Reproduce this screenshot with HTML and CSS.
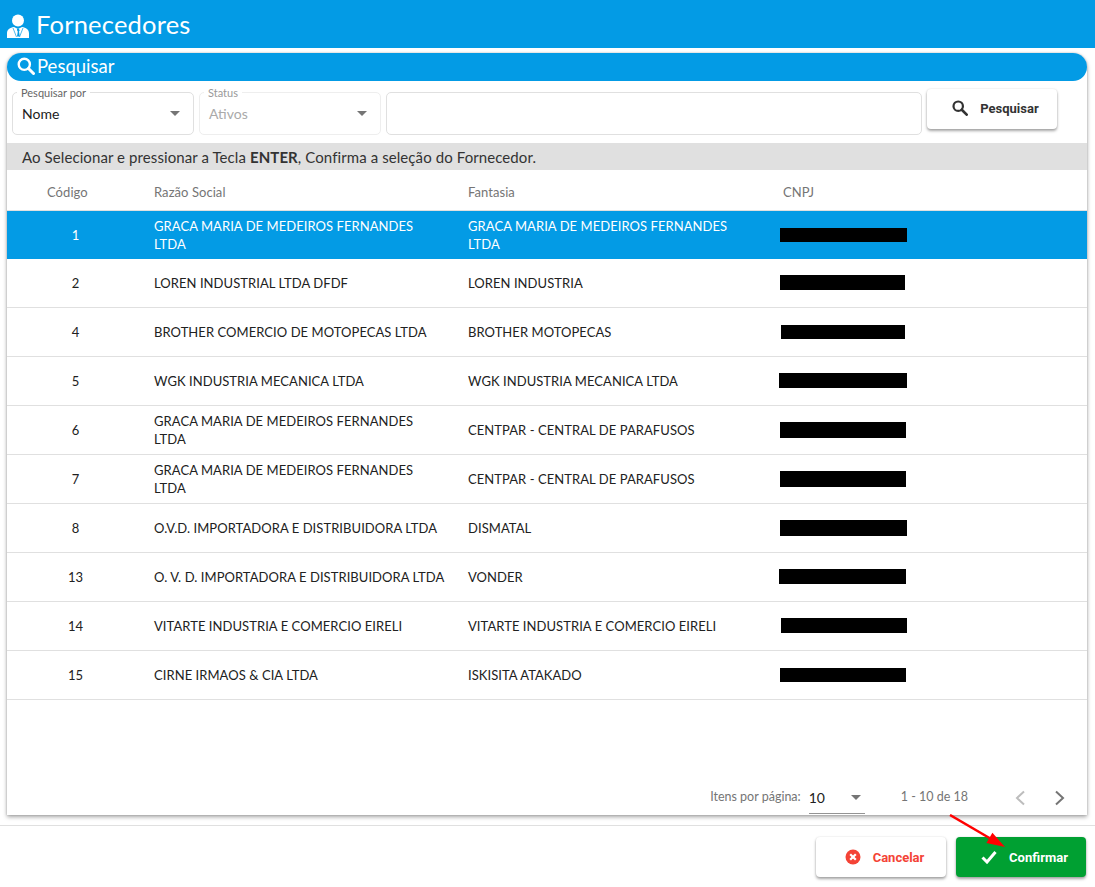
FILE: index.html
```html
<!DOCTYPE html>
<html lang="pt-BR">
<head>
<meta charset="utf-8">
<title>Fornecedores</title>
<link rel="stylesheet" href="styles.css">
</head>
<body>
<header class="topbar">
  <svg class="topbar-icon" viewBox="0 0 22 24" width="22" height="24"><circle cx="11" cy="6.500" r="6" fill="#fff"/><path d="M0 24v-4.500c0-4 3-6 7-6.500l4 2 4-2c4 .5 7 2.500 7 6.500V24z" fill="#fff"/><path d="M10 15h2l.7 1.500-.7 1 .8 5h-2.800l.8-5-.7-1z" fill="#039be5"/><path d="M6 14l3.500 9M16 14l-3.500 9" stroke="#039be5" stroke-width=".7"/></svg>
  <h1 class="topbar-title">Fornecedores</h1>
</header>
<main class="card">
  <div class="search-head">
    <svg viewBox="0 0 18 18" width="18" height="18"><circle cx="7.300" cy="7.300" r="5.600" fill="none" stroke="#fff" stroke-width="2.400"/><path d="M11.500 11.500l5 5" stroke="#fff" stroke-width="3" stroke-linecap="round"/></svg>
    <span>Pesquisar</span>
  </div>
  <div class="filters">
    <div class="field field-select">
      <span class="field-label">Pesquisar por</span>
      <span class="field-value">Nome</span>
      <span class="caret"></span>
    </div>
    <div class="field field-select field-disabled">
      <span class="field-label">Status</span>
      <span class="field-value">Ativos</span>
      <span class="caret"></span>
    </div>
    <div class="field field-text"></div>
    <button class="btn btn-search">
      <svg viewBox="0 0 18 18" width="16" height="16"><circle cx="7" cy="7" r="5.300" fill="none" stroke="#333" stroke-width="2.500"/><path d="M11 11l5.500 5.500" stroke="#333" stroke-width="3" stroke-linecap="round"/></svg>
      <span>Pesquisar</span>
    </button>
  </div>
  <div class="notice">Ao Selecionar e pressionar a Tecla <b>ENTER</b>, Confirma a seleção do Fornecedor.</div>
  <table class="grid">
    <colgroup><col class="c-code"><col class="c-name"><col class="c-fant"><col class="c-cnpj"></colgroup>
    <thead>
      <tr><th class="th-code">Código</th><th>Razão Social</th><th>Fantasia</th><th class="th-cnpj">CNPJ</th></tr>
    </thead>
    <tbody>
      <tr class="selected"><td class="code">1</td><td>GRACA MARIA DE MEDEIROS FERNANDES LTDA</td><td>GRACA MARIA DE MEDEIROS FERNANDES LTDA</td><td><i class="mask" style="width:127px;height:14px;margin-left:0"></i></td></tr>
      <tr class="after-selected"><td class="code">2</td><td>LOREN INDUSTRIAL LTDA DFDF</td><td>LOREN INDUSTRIA</td><td><i class="mask" style="width:125px;height:15px;margin-left:0"></i></td></tr>
      <tr><td class="code">4</td><td>BROTHER COMERCIO DE MOTOPECAS LTDA</td><td>BROTHER MOTOPECAS</td><td><i class="mask" style="width:124px;height:14px;margin-left:1px"></i></td></tr>
      <tr><td class="code">5</td><td>WGK INDUSTRIA MECANICA LTDA</td><td>WGK INDUSTRIA MECANICA LTDA</td><td><i class="mask" style="width:128px;height:15px;margin-left:-1px"></i></td></tr>
      <tr><td class="code">6</td><td>GRACA MARIA DE MEDEIROS FERNANDES LTDA</td><td>CENTPAR - CENTRAL DE PARAFUSOS</td><td><i class="mask" style="width:126px;height:16px;margin-left:0"></i></td></tr>
      <tr><td class="code">7</td><td>GRACA MARIA DE MEDEIROS FERNANDES LTDA</td><td>CENTPAR - CENTRAL DE PARAFUSOS</td><td><i class="mask" style="width:126px;height:16px;margin-left:0"></i></td></tr>
      <tr><td class="code">8</td><td>O.V.D. IMPORTADORA E DISTRIBUIDORA LTDA</td><td>DISMATAL</td><td><i class="mask" style="width:127px;height:16px;margin-left:0"></i></td></tr>
      <tr><td class="code">13</td><td>O. V. D. IMPORTADORA E DISTRIBUIDORA LTDA</td><td>VONDER</td><td><i class="mask" style="width:127px;height:15px;margin-left:-1px"></i></td></tr>
      <tr><td class="code">14</td><td>VITARTE INDUSTRIA E COMERCIO EIRELI</td><td>VITARTE INDUSTRIA E COMERCIO EIRELI</td><td><i class="mask" style="width:126px;height:15px;margin-left:1px"></i></td></tr>
      <tr><td class="code">15</td><td>CIRNE IRMAOS &amp; CIA LTDA</td><td>ISKISITA ATAKADO</td><td><i class="mask" style="width:126px;height:14px;margin-left:0"></i></td></tr>
    </tbody>
  </table>
  <div class="pager">
    <span class="pager-label">Itens por página:</span>
    <div class="pager-select"><span>10</span><span class="caret"></span></div>
    <span class="pager-range">1 - 10 de 18</span>
    <svg class="chev" viewBox="0 0 12 16" width="12" height="16"><path d="M10 1.500L3 8l7 6.500" fill="none" stroke="#bdbdbd" stroke-width="2"/></svg>
    <svg class="chev chev-next" viewBox="0 0 12 16" width="12" height="16"><path d="M2 1.500L9 8l-7 6.500" fill="none" stroke="#757575" stroke-width="2"/></svg>
  </div>
</main>
<footer class="actions">
  <button class="btn btn-cancel">
    <svg viewBox="0 0 16 16" width="16" height="16"><circle cx="8" cy="8" r="7.500" fill="#f44336"/><path d="M5.200 5.200l5.600 5.600M10.800 5.200l-5.600 5.600" stroke="#fff" stroke-width="2.200"/></svg>
    <span>Cancelar</span>
  </button>
  <button class="btn btn-confirm">
    <svg viewBox="0 0 16 14" width="16" height="14"><path d="M1.500 7.500l4.500 4.500 8.500-10" fill="none" stroke="#fff" stroke-width="3"/></svg>
    <span>Confirmar</span>
  </button>
</footer>
<svg class="arrow" viewBox="0 0 70 45" width="70" height="45"><path d="M10 1L52 25.500" stroke="#f00" stroke-width="2.500"/><path d="M65 33L46.400 29.100 52.400 18.700z" fill="#f00"/></svg>
</body>
</html>
```
FILE: styles.css
```css
* { box-sizing: border-box; }
html, body { margin: 0; padding: 0; }
body {
  position: relative;
  width: 1095px;
  height: 887px;
  overflow: hidden;
  background: #fff;
  font-family: "Lato", "Noto Sans", sans-serif;
  color: #333;
}
.topbar {
  height: 48px;
  background: #039be5;
  display: flex;
  align-items: center;
  padding: 0 0 0 7px;
  gap: 7px;
}
.topbar-icon { display: block; margin-top: 4px; }
.topbar-title {
  margin: 0 0 1px;
  font-size: 25.500px;
  font-weight: 400;
  color: #fff;
  letter-spacing: .2px;
}
.card {
  margin: 5px 8px 0 7px;
  height: 762px;
  display: flex;
  flex-direction: column;
  box-shadow: 0 2px 4px rgba(0,0,0,.35), 0 0 2px rgba(0,0,0,.2);
  background: #fff;
  border-radius: 14px 14px 0 0;
}
.search-head {
  height: 28px;
  background: #039be5;
  border-radius: 14px;
  color: #fff;
  font-size: 18.500px;
  display: flex;
  align-items: center;
  gap: 2px;
  padding: 0 0 2px 10px;
  flex: none;
}
.filters {
  display: flex;
  padding: 8px 0 0 5px;
  gap: 5px;
  height: 62px;
  flex: none;
}
.field {
  position: relative;
  margin-top: 3px;
  height: 43px;
  border: 1px solid #e0e0e0;
  border-radius: 5px;
}
.field-select { width: 182px; display: flex; align-items: center; padding: 1px 9px; justify-content: space-between; font-size: 14px; color: #212121; }
.field-label {
  position: absolute;
  top: -7px;
  left: 4px;
  padding: 0 4px;
  background: #fff;
  font-size: 11px;
  line-height: 13px;
  color: #666;
}
.field-disabled { border-color: #eee; color: #aaa; }
.field-disabled .field-label { color: #999; }
.field-text { width: 536px; }
.caret {
  width: 0;
  height: 0;
  border-left: 5px solid transparent;
  border-right: 5px solid transparent;
  border-top: 5px solid #757575;
  margin-right: 4px;
}
.btn {
  display: flex;
  align-items: center;
  justify-content: center;
  border: 0;
  border-radius: 4px;
  font-family: "Roboto", sans-serif;
  font-size: 13px;
  font-weight: 700;
  background: #fff;
  box-shadow: 0 2px 3px rgba(0,0,0,.35), 0 0 2px rgba(0,0,0,.12);
}
.btn-search {
  width: 130px;
  height: 40px;
  gap: 12px;
  color: #333;
  padding: 0 0 2px 7px;
}
.notice {
  height: 27px;
  flex: none;
  background: #e0e0e0;
  font-size: 15px;
  line-height: 28px;
  padding-left: 15px;
  color: #333;
  letter-spacing: .09px;
}
.grid {
  width: 100%;
  border-collapse: collapse;
  table-layout: fixed;
  font-size: 13px;
  letter-spacing: .06px;
  flex: none;
}
.c-code { width: 147px; }
.c-name { width: 314px; }
.c-fant { width: 312px; }
.grid th {
  height: 40px;
  font-size: 13px;
  font-weight: 400;
  color: #757575;
  text-align: left;
  padding: 4px 0 0 0;
  border-bottom: 1px solid #e0e0e0;
}
.th-code { padding-left: 40px !important; }
.th-cnpj { padding-left: 3px !important; }
.grid td {
  height: 49px;
  padding: 0 23px 0 0;
  border-bottom: 1px solid #e0e0e0;
  line-height: 18px;
  color: #212121;
}
.grid td.code { text-align: center; padding: 0 10px 0 0; }
.grid .selected td { background: #039be5; color: #fff; height: 49px; border-bottom: 0; }
.grid .after-selected td { height: 48px; }
.mask { display: block; background: #000; }
.pager {
  margin-top: auto;
  height: 37px;
  display: flex;
  align-items: center;
  padding-right: 21px;
  justify-content: flex-end;
  font-size: 12.500px;
  color: #757575;
}
.pager-select {
  width: 56px;
  height: 31px;
  margin-left: 8px;
  border-bottom: 1px solid #949494;
  display: flex;
  align-items: center;
  justify-content: space-between;
  font-size: 14px;
  color: #212121;
  margin-top: 3px;
}
.pager-range { margin-left: 36px; margin-right: 46px; }
.chev { display: block; margin-top: 2px; }
.chev-next { margin-left: 28px; }
.actions {
  margin-top: 10px;
  border-top: 1px solid #e0e0e0;
  padding: 11px 9px 0 0;
  display: flex;
  justify-content: flex-end;
  gap: 10px;
}
.btn-cancel, .btn-confirm { width: 130px; height: 40px; gap: 12px; padding: 0 0 0 7px; }
.btn-cancel { color: #f44336; }
.btn-confirm { background: #00a032; color: #fff; }
.arrow { position: absolute; left: 940px; top: 814px; }
```
